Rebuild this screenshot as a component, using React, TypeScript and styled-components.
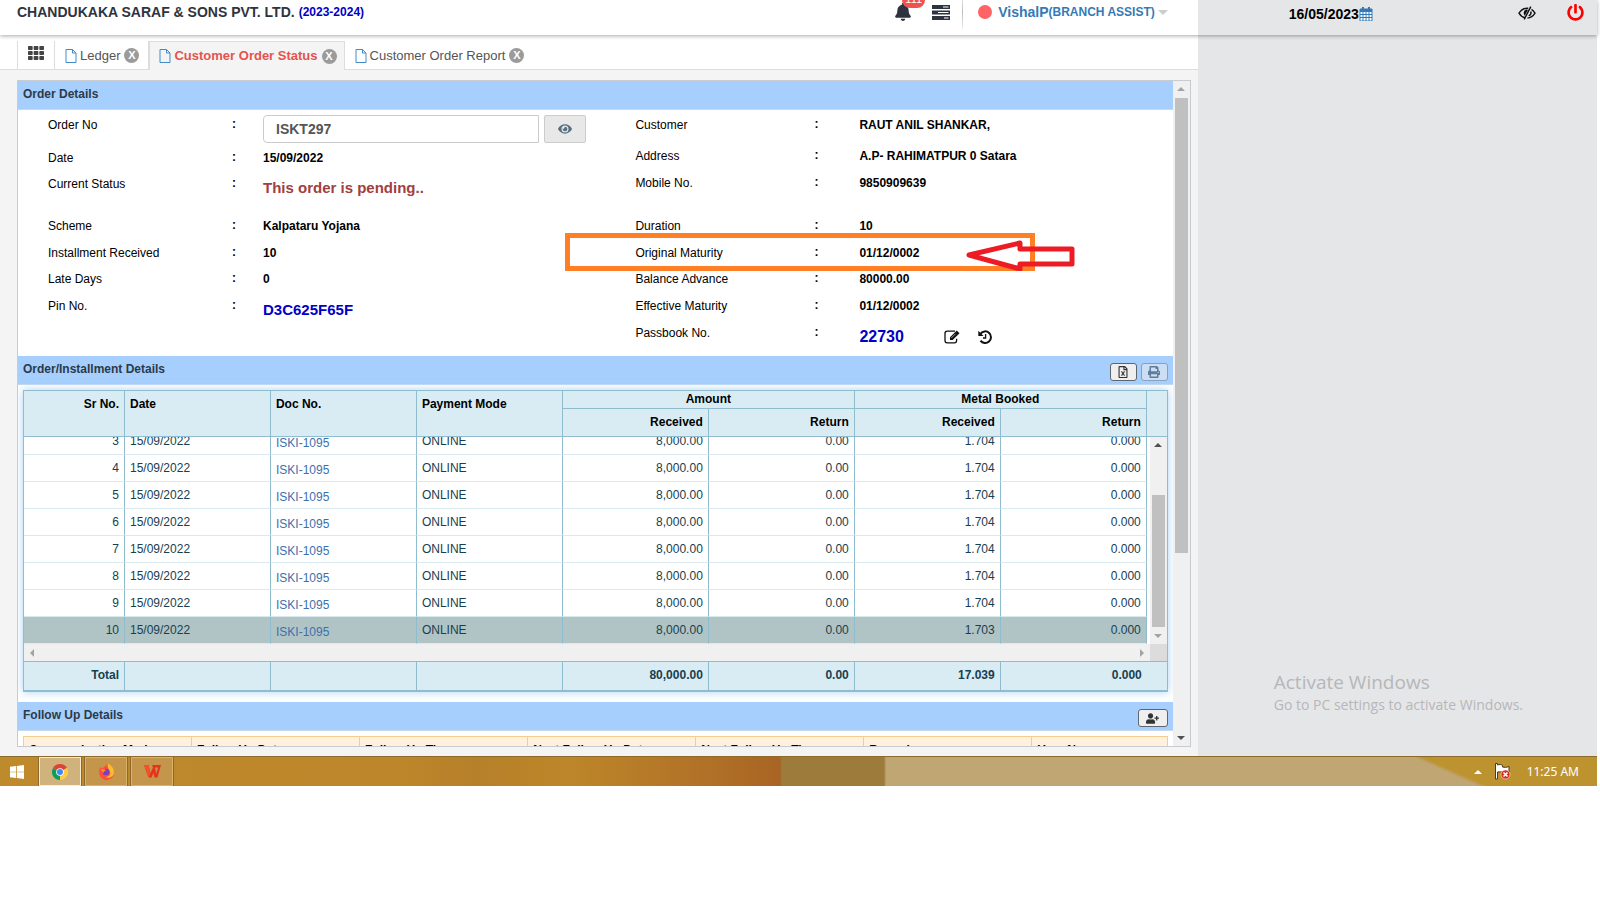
import React from 'react';
import styled, { createGlobalStyle, css } from 'styled-components';
import { FaBell, FaEye, FaPowerOff, FaPrint, FaUserPlus, FaRegFileExcel, FaTh } from 'react-icons/fa';

const C = {
  line: '#8fbdcf',
  head: '#d9ecf4',
  bar: '#a6cffd',
  bar2: '#c5daf0',
  link: '#337ab7',
  track: '#f0f0f0',
  thumb: '#c0c0c0',
};

const Global = createGlobalStyle`
  * { box-sizing: border-box; }
  body { margin: 0; background: #fff; font: 12px/16px "Liberation Sans", Arial, sans-serif; color: #000; }
  button, input { font-family: inherit; }
  a { text-decoration: none; }
`;

const Screen = styled.div`
  display: flex;
  flex-direction: column;
  margin-right: 3px;
`;
const Header = styled.header`
  display: flex;
  height: 35px;
  background: linear-gradient(to right, #fff 75%, #e5e6e8 75%);
  box-shadow: 0 1px 4px rgba(0, 0, 0, 0.35);
  position: relative;
  z-index: 1;
`;
const HeaderMain = styled.div`
  width: 75%;
  display: flex;
  align-items: center;
  padding: 0 30px 11px 17px;
`;
const HeaderSide = styled.div`
  width: 25%;
  display: flex;
  align-items: center;
  padding: 0 13px 7px 91px;
`;
const Company = styled.h1`
  margin: 0 4px 0 0;
  font-size: 14px;
  color: #2e3340;
`;
const Year = styled.b`
  color: #0000c8;
`;
const Spacer = styled.div`
  flex: 1;
`;
const Actions = styled.div<{ $gap: number }>`
  display: flex;
  align-items: center;
  gap: ${(p) => p.$gap}px;
  height: 24px;
`;
const TopActions = styled(Actions)`
  padding-bottom: 3px;
`;
const IconButton = styled.button<{ $color?: string }>`
  display: flex;
  position: relative;
  padding: 0;
  border: 0;
  background: none;
  color: ${(p) => p.$color || '#2e3340'};
`;
const Badge = styled.span`
  position: absolute;
  left: 8px;
  top: -11px;
  width: 23px;
  height: 16px;
  border-radius: 8px;
  background: #f0524f;
  color: #fff;
  font-size: 11px;
  line-height: 14px;
  text-align: center;
`;
const Divider = styled.div`
  width: 1px;
  height: 34px;
  margin: 0 15px 0 12px;
  background: linear-gradient(#eee, #bbb, #eee);
`;
const Dot = styled.span`
  width: 14px;
  height: 14px;
  margin-right: 6px;
  border-radius: 50%;
  background: #ff6464;
`;
const UserMenu = styled.button`
  display: flex;
  align-items: center;
  padding: 0;
  border: 0;
  background: none;
  color: ${C.link};
  font-weight: bold;
  font-size: 12px;
  line-height: 16px;
  strong { font-size: 14px; }
`;
const Caret = styled.span`
  margin-left: 3px;
  border: 5px solid transparent;
  border-top-color: #ccc;
  border-bottom: 0;
`;
const DateText = styled.b`
  font-size: 14px;
`;
const Columns = styled.div`
  display: flex;
`;
const Main = styled.main`
  width: 75%;
  background: #f4f4f4;
`;
const Aside = styled.aside`
  width: 25%;
  display: flex;
  flex-direction: column;
  justify-content: flex-end;
  padding: 0 0 42px 76px;
  background: #e5e6e8;
  color: #b6b7b8;
  font-family: "Open Sans", "Noto Sans", sans-serif;
  font-size: 14px;
  line-height: 18px;
`;
const AsideTitle = styled.div`
  font-size: 19px;
  line-height: 28px;
`;
const Tabs = styled.nav`
  display: flex;
  height: 35px;
  padding: 6px 0 0 17px;
  background: #fff;
  border-bottom: 1px solid #ddd;
`;
const Tab = styled.div<{ $active?: boolean }>`
  display: flex;
  align-items: center;
  gap: 4px;
  height: 29px;
  padding: 0 9px 0 10px;
  font-size: 13px;
  color: #555;
  ${(p) => p.$active && css`
    padding: 0 7px 0 9px;
    background: #f4f4f4;
    border: 1px solid #ddd;
    border-width: 1px 1px 0 2px;
    a { color: #e5534f; font-weight: bold; }
  `}
`;
const TabLink = styled.a`
  display: flex;
  align-items: center;
  gap: 3px;
  color: #555;
`;
const GridTab = styled.button`
  width: 38px;
  height: 28px;
  display: flex;
  align-items: center;
  justify-content: center;
  padding: 0 0 5px;
  border: 1px solid #ddd;
  border-width: 0 1px;
  background: #fff;
`;
const Close = styled.button`
  width: 15px;
  height: 15px;
  padding: 0;
  border: 0;
  border-radius: 50%;
  background: #9b9b9b;
  color: #fff;
  font-size: 11px;
  line-height: 15px;
  font-weight: bold;
`;
const Frame = styled.div`
  display: flex;
  height: 667px;
  margin: 10px 7px 9px 17px;
  border: 1px solid #c8ccd0;
  background: #fff;
`;
const Content = styled.div`
  flex: 1;
  min-width: 0;
  overflow: hidden;
`;
const Track = styled.div`
  display: flex;
  flex-direction: column;
  align-items: center;
  width: 17px;
  padding: 6px 0;
  background: ${C.track};
`;
const Thumb = styled.div<{ $h: number; $top: number }>`
  width: 13px;
  height: ${(p) => p.$h}px;
  margin-top: ${(p) => p.$top}px;
  background: ${C.thumb};
`;
const Arrow = styled.span<{ $dir: 'up' | 'down' | 'left' | 'right'; $color?: string }>`
  border: 4px solid transparent;
  ${(p) => {
    const c = p.$color || '#a3a3a3';
    return {
      up: `border-bottom-color: ${c}; border-top: 0;`,
      down: `border-top-color: ${c}; border-bottom: 0;`,
      left: `border-right-color: ${c}; border-left: 0;`,
      right: `border-left-color: ${c}; border-right: 0;`,
    }[p.$dir];
  }}
`;
const SectionBar = styled.div`
  display: flex;
  justify-content: space-between;
  align-items: flex-start;
  height: 29px;
  padding: 5px 5px 0;
  background: ${C.bar};
  border-bottom: 1px solid ${C.bar2};
`;
const SectionTitle = styled.h2`
  margin: 0;
  font-size: 12px;
  line-height: 16px;
  color: #2b3a4a;
`;
const Tools = styled.div`
  display: flex;
  gap: 4px;
  padding-top: 2px;
`;
const ToolButton = styled.button<{ $off?: boolean; $wide?: boolean }>`
  display: flex;
  align-items: center;
  justify-content: center;
  width: ${(p) => (p.$wide ? 30 : 27)}px;
  height: 18px;
  padding: 0;
  border: 1px solid ${(p) => (p.$off ? '#8aa0b8' : '#5d666f')};
  border-radius: 3px;
  background: ${(p) => (p.$off ? '#cbdef4' : '#efefef')};
  color: ${(p) => (p.$off ? '#5f7d9c' : '#333')};
`;
const Details = styled.div`
  display: grid;
  grid-template-columns: 1fr 1fr;
  height: 246px;
  padding: 5px 0 0 30px;
`;
const List = styled.div`
  position: relative;
`;
const Field = styled.div<{ $h: number }>`
  display: grid;
  grid-template-columns: 184px 31px 1fr;
  height: ${(p) => p.$h}px;
  padding-top: 2px;
`;
const RightField = styled(Field)`
  grid-template-columns: 179px 45px 1fr;
  padding-left: 25px;
`;
const Value = styled.div<{ $tone?: string; $size?: number }>`
  font-weight: bold;
  font-size: ${(p) => p.$size || 12}px;
  color: ${(p) => p.$tone || '#000'};
  padding-top: ${(p) => (p.$size ? 4 : 0)}px;
`;
const Colon = styled.b`
  line-height: 14px;
`;
const OrderRow = styled.div`
  display: flex;
  gap: 5px;
  height: 28px;
  margin-top: -2px;
`;
const OrderInput = styled.input`
  width: 276px;
  padding: 0 12px;
  border: 1px solid #ccc;
  border-radius: 4px 0 0 4px;
  font-size: 14px;
  font-weight: bold;
  color: #555;
`;
const ViewButton = styled.button`
  display: flex;
  align-items: center;
  justify-content: center;
  width: 42px;
  border: 1px solid #ccc;
  border-radius: 2px;
  background: #e8e8e8;
  color: #55707f;
`;
const Passbook = styled.div`
  display: flex;
  align-items: center;
  gap: 18px;
  height: 16px;
  margin-top: 4px;
  color: #0000c8;
  font-size: 16px;
  font-weight: bold;
  button:first-of-type { margin-left: 22px; }
`;
const Highlight = styled.div`
  position: absolute;
  left: -45px;
  top: 118px;
  width: 470px;
  height: 38px;
  border: 5px solid #ff7f27;
`;
const Pointer = styled.svg`
  position: absolute;
  left: 355px;
  top: 124px;
`;
const GridBox = styled.div`
  margin: 5px 5px 10px;
  border: 1px solid ${C.line};
  border-bottom-width: 2px;
  box-shadow: 0 0 8px rgba(110, 180, 240, 0.6);
`;
const Table = styled.table`
  width: 100%;
  table-layout: fixed;
  border-collapse: separate;
  border-spacing: 0;
  th, td { padding: 0 5px; text-align: left; border-right: 1px solid ${C.line}; }
  .num { text-align: right; }
`;
const HeadTable = styled(Table)`
  height: 46px;
  background: ${C.head};
  border-bottom: 1px solid ${C.line};
  th { vertical-align: top; padding-top: 5px; }
  .group { height: 18px; padding: 0; text-align: center; border-bottom: 1px solid ${C.line}; }
  .end { border-right: 0; }
`;
const BodyArea = styled.div`
  display: flex;
  height: 207px;
`;
const BodyView = styled.div`
  flex: 1;
  min-width: 0;
  overflow: hidden;
  display: flex;
  flex-direction: column;
  justify-content: flex-end;
`;
const BodyTable = styled(Table)`
  flex: none;
  color: #17404f;
  td { height: 27px; padding-bottom: 1px; border-bottom: 1px solid #d9eaf0; }
  td a { display: block; padding-top: 5px; color: #3c70ad; }
  tr.on td { background: #b0c4c6; border-bottom-color: #d9eaf0; }
`;
const InnerTrack = styled(Track)`
  margin-left: 3px;
`;
const HTrack = styled.div`
  display: flex;
  align-items: center;
  height: 17px;
  padding-left: 6px;
  background: ${C.track};
`;
const Corner = styled.div`
  width: 17px;
  height: 17px;
  margin-left: 6px;
  background: #dcdcdc;
`;
const FootTable = styled(Table)`
  background: ${C.head};
  border-top: 1px solid ${C.line};
  color: #17404f;
  font-weight: bold;
  td { height: 28px; padding-bottom: 3px; }
  td.end, td:last-child { border-right: 0; }
`;
const FollowBox = styled.div`
  margin: 5px 5px 0;
  border: 1px solid #f2cf8e;
  background: #fff1de;
`;
const FollowTable = styled(Table)`
  th { width: 15%; height: 30px; padding-top: 5px; border-color: #f2cf8e; vertical-align: top; }
  th:last-child { width: 12%; border-right: 0; }
`;
const Taskbar = styled.footer`
  display: flex;
  height: 30px;
  border-top: 1px solid #8d6a2c;
  background:
    linear-gradient(24deg, transparent 26%, #bd9330 30%) right / 184px 100% no-repeat,
    linear-gradient(to right, #bd8a2c 0, #bd862a 400px, #b6802a 475px, #bd8629 570px, #af6f27 720px, #a86424 780px, #9d7b3b 782px, #9d7b3b 884px, #bfa673 886px);
`;
const TaskButton = styled.button<{ $on?: boolean; $bare?: boolean }>`
  display: flex;
  align-items: center;
  justify-content: center;
  width: ${(p) => (p.$bare ? 34 : 42)}px;
  height: 29px;
  margin-right: ${(p) => (p.$bare ? 5 : 4)}px;
  padding: 0;
  border: 1px solid ${(p) => (p.$bare ? 'transparent' : p.$on ? '#f7ecd2' : '#d9b26b')};
  background: ${(p) => (p.$bare ? 'none' : p.$on ? '#cfb27c' : '#c4964c')};
  box-shadow: ${(p) => (p.$bare ? 'none' : '0 0 0 1px #8d6a2c')};
`;
const Tray = styled.div`
  display: flex;
  align-items: center;
  gap: 12px;
  margin-left: auto;
  padding-right: 18px;
  color: #fff;
  font-family: "Noto Sans", "Open Sans", sans-serif;
  span:last-child { margin-left: 4px; }
`;

const CalendarIcon = () => (
  <svg width="14" height="14" viewBox="0 0 14 14">
    <path d="M1 2h12v12H1z" fill="#fff" stroke={C.link} />
    <path d="M1 7.5h12M1 10.5h12M4 5v9M7 5v9M10 5v9" stroke={C.link} />
    <path d="M1 3.5h12" stroke={C.link} strokeWidth="3" />
    <path d="M4 0v3M10 0v3" stroke={C.link} strokeWidth="2" />
  </svg>
);
const TasksIcon = () => (
  <svg width="18" height="15" viewBox="0 0 18 15" fill="currentColor">
    <path d="M0 0h18v4H0zM0 5.500h18v4H0zM0 11h18v4H0z" />
    <path d="M11 1.500h5.500v1H11zM6 7h10.500v1H6zM12 12.500h4.500v1H12z" fill="#fff" />
  </svg>
);
const HiddenEyeIcon = () => (
  <svg width="18" height="14" viewBox="0 0 18 14" fill="none" stroke="currentColor" strokeWidth="1.400">
    <path d="M7 11.800C4.500 11.200 2.300 9.500 1 7.200 3 4 6 2.200 9 2.200l1.200.1" />
    <path d="M13.500 3.400c1.500.9 2.600 2.200 3.500 3.800-1.800 3-4.500 4.700-7.600 4.900" />
    <path d="M12.800.6L6.200 13.400" strokeWidth="1.500" />
    <path d="M6.800 9.800C5 8 5.300 4.500 8.200 3.500l1.800.2z" fill="currentColor" stroke="none" />
    <path d="M13 5.500c.3 2-.6 3.600-2.300 4.300" />
  </svg>
);
const EditIcon = () => (
  <svg width="16" height="14" viewBox="0 0 16 14" fill="none" stroke="currentColor">
    <path d="M11 1.200H3.200Q1 1.200 1 3.400v7.200q0 2.200 2.200 2.200h7.200q2.200 0 2.200-2.200V8.800" strokeWidth="1.300" />
    <path d="M6 7.300L12.800.5l2.700 2.700L8.700 10H6z" fill="currentColor" stroke="none" />
    <path d="M7.300 8l4.200-4.200" stroke="#fff" strokeWidth=".6" />
  </svg>
);
const HistoryIcon = () => (
  <svg width="14" height="14" viewBox="0 0 14 14" fill="none" stroke="currentColor">
    <path d="M2.600 3.600A5.800 5.800 0 1 1 2.500 10.600" strokeWidth="2" />
    <path d="M.3.800v5.200h5.200z" fill="currentColor" stroke="none" />
    <path d="M7.600 4v4H5" strokeWidth="1.300" />
  </svg>
);
const FileIcon = () => (
  <svg width="12" height="14" viewBox="0 0 12 14" fill="none" stroke="#428bca">
    <path d="M1 .5h6.500L11 4v9.500H1zM7.500.5V4H11" />
  </svg>
);
const WindowsIcon = () => (
  <svg width="14" height="14" viewBox="0 0 15 15" fill="#fff">
    <path d="M0 2l6.500-.9v6H0zM7.300 1L15 0v7.100H7.300zM0 7.900h6.500v6L0 13zM7.300 7.900H15V15l-7.700-1z" />
  </svg>
);
const ChromeIcon = () => (
  <svg width="16" height="16" viewBox="0 0 16 16">
    <path d="M8 8L1.070 4A8 8 0 0 1 14.930 4z" fill="#db4437" />
    <path d="M8 8L14.930 4A8 8 0 0 1 8 16z" fill="#ffcd40" />
    <path d="M8 8v8A8 8 0 0 1 1.070 4z" fill="#0f9d58" />
    <circle cx="8" cy="8" r="3.800" fill="#fff" />
    <circle cx="8" cy="8" r="3" fill="#4285f4" />
  </svg>
);
const FirefoxIcon = () => (
  <svg width="17" height="17" viewBox="0 0 17 17">
    <path d="M2 4l1.500 1.500L6 4l4-3.500L12 4l3 2c3 6-2 11-6.500 11S-1 12 2 4z" fill="#ff4f3a" />
    <path d="M10 .5c4 2.500 7 6 5.500 11-1.500 3-5 4-8 2.500 5 0 6-4 3.500-7.500C10 5 9 3 10 .5z" fill="#ffbd2e" />
    <circle cx="8" cy="9" r="3.300" fill="#7a3fc0" />
    <path d="M2.500 6.500c3-1 4.500 0 6 1-2 0-2.500 1-3 2.500z" fill="#ff8a1f" />
  </svg>
);
const WpsIcon = () => (
  <svg width="17" height="13" viewBox="0 0 17 13">
    <path d="M0 0h4.500l2 8L9 2.500 8 0h9l-3.500 12.500h-3L9.500 8l-2 4.500h-3z" fill="#e8321e" />
    <path d="M11 2.500h3L12.300 9z" fill="#c4964c" />
    <path d="M0 0h4.500l2 8-2 4.500z" fill="#f4502c" />
  </svg>
);
const FlagIcon = () => (
  <svg width="17" height="17" viewBox="0 0 17 17">
    <path d="M1.500.5h2V2c2-.8 3.500-.5 5 .3V4c2 .6 4 .5 6.500-.5v6c-4 1.500-7-1.500-11.500-.5V16h-2z" fill="#fff" stroke="#4c3b1c" />
    <circle cx="11.500" cy="11.500" r="4.500" fill="#d92c23" stroke="#fff" strokeWidth=".5" />
    <path d="M9.500 9.500l4 4m0-4l-4 4" stroke="#fff" strokeWidth="1.600" />
  </svg>
);

const Cols = ({ tail }: { tail?: boolean }) => (
  <colgroup>
    <col width={101} />
    {Array.from({ length: 7 }, (_, i) => <col key={i} />)}
    {tail && <col width={20} />}
  </colgroup>
);

const rows = [3, 4, 5, 6, 7, 8, 9, 10];
const followUp = ['Communication Mode', 'Follow Up Date', 'Follow Up Time', 'Next Follow Up Date', 'Next Follow Up Time', 'Remark', 'User Name'];

type RowProps = { label: string; h: number; children: React.ReactNode };
const Row = ({ label, h, children }: RowProps) => (
  <Field $h={h}><span>{label}</span><Colon>:</Colon>{children}</Field>
);
const RRow = ({ label, h, children }: RowProps) => (
  <RightField $h={h}><span>{label}</span><Colon>:</Colon>{children}</RightField>
);

export default function App() {
  return (
    <Screen>
      <Global />
      <Header>
        <HeaderMain>
          <Company>CHANDUKAKA SARAF &amp; SONS PVT. LTD.</Company>
          <Year>(2023-2024)</Year>
          <Spacer />
          <Actions $gap={20}>
            <IconButton aria-label="Notifications"><FaBell size={18} /><Badge>111</Badge></IconButton>
            <IconButton aria-label="Tasks"><TasksIcon /></IconButton>
          </Actions>
          <Divider />
          <Dot />
          <UserMenu><strong>VishalP</strong>(BRANCH ASSIST)<Caret /></UserMenu>
        </HeaderMain>
        <HeaderSide>
          <DateText>16/05/2023</DateText>
          <IconButton aria-label="Pick date"><CalendarIcon /></IconButton>
          <Spacer />
          <TopActions $gap={31}>
            <IconButton $color="#111" aria-label="Hide"><HiddenEyeIcon /></IconButton>
            <IconButton $color="#f00" aria-label="Log out"><FaPowerOff size={17} /></IconButton>
          </TopActions>
        </HeaderSide>
      </Header>
      <Columns>
        <Main>
          <Tabs>
            <GridTab aria-label="All modules"><FaTh size={16} color="#444" /></GridTab>
            <Tab><TabLink href="#ledger"><FileIcon />Ledger</TabLink><Close aria-label="Close Ledger">X</Close></Tab>
            <Tab $active><TabLink href="#status"><FileIcon />Customer Order Status</TabLink><Close aria-label="Close Customer Order Status">X</Close></Tab>
            <Tab><TabLink href="#report"><FileIcon />Customer Order Report</TabLink><Close aria-label="Close Customer Order Report">X</Close></Tab>
          </Tabs>
          <Frame>
            <Content>
              <SectionBar><SectionTitle>Order Details</SectionTitle></SectionBar>
              <Details>
                <List>
                  <Field $h={33}>
                    <label htmlFor="order">Order No</label><Colon>:</Colon>
                    <OrderRow>
                      <OrderInput id="order" defaultValue="ISKT297" />
                      <ViewButton aria-label="View order"><FaEye size={14} /></ViewButton>
                    </OrderRow>
                  </Field>
                  <Row label="Date" h={26}><Value>15/09/2022</Value></Row>
                  <Row label="Current Status" h={42}><Value $tone="#a04040" $size={15}>This order is pending..</Value></Row>
                  <Row label="Scheme" h={27}><Value>Kalpataru Yojana</Value></Row>
                  <Row label="Installment Received" h={26}><Value>10</Value></Row>
                  <Row label="Late Days" h={27}><Value>0</Value></Row>
                  <Row label="Pin No." h={27}><Value $tone="#0000c8" $size={15}>D3C625F65F</Value></Row>
                </List>
                <List>
                  <RRow label="Customer" h={31}><Value>RAUT ANIL SHANKAR,</Value></RRow>
                  <RRow label="Address" h={27}><Value>A.P- RAHIMATPUR 0 Satara</Value></RRow>
                  <RRow label="Mobile No." h={43}><Value>9850909639</Value></RRow>
                  <RRow label="Duration" h={27}><Value>10</Value></RRow>
                  <RRow label="Original Maturity" h={26}><Value>01/12/0002</Value></RRow>
                  <RRow label="Balance Advance" h={27}><Value>80000.00</Value></RRow>
                  <RRow label="Effective Maturity" h={27}><Value>01/12/0002</Value></RRow>
                  <RRow label="Passbook No." h={27}>
                    <Passbook>
                      22730
                      <IconButton $color="#111" aria-label="Edit"><EditIcon /></IconButton>
                      <IconButton $color="#111" aria-label="History"><HistoryIcon /></IconButton>
                    </Passbook>
                  </RRow>
                  <Highlight />
                  <Pointer width="112" height="32" viewBox="0 0 112 32">
                    <path d="M4 16L55 4v6h52v15H55v5z" fill="none" stroke="#ed1c24" strokeWidth="5" strokeLinejoin="round" />
                  </Pointer>
                </List>
              </Details>
              <SectionBar>
                <SectionTitle>Order/Installment Details</SectionTitle>
                <Tools>
                  <ToolButton aria-label="Export to Excel"><FaRegFileExcel size={12} /></ToolButton>
                  <ToolButton $off disabled aria-label="Print"><FaPrint size={12} /></ToolButton>
                </Tools>
              </SectionBar>
              <GridBox>
                <HeadTable>
                  <Cols tail />
                  <thead>
                    <tr>
                      <th rowSpan={2} className="num">Sr No.</th>
                      <th rowSpan={2}>Date</th>
                      <th rowSpan={2}>Doc No.</th>
                      <th rowSpan={2}>Payment Mode</th>
                      <th colSpan={2} className="group">Amount</th>
                      <th colSpan={2} className="group">Metal Booked</th>
                      <th rowSpan={2} className="end" />
                    </tr>
                    <tr>
                      <th className="num">Received</th>
                      <th className="num">Return</th>
                      <th className="num">Received</th>
                      <th className="num">Return</th>
                    </tr>
                  </thead>
                </HeadTable>
                <BodyArea>
                  <BodyView>
                    <BodyTable>
                      <Cols />
                      <tbody>
                        {rows.map((n) => (
                          <tr key={n} className={n === 10 ? 'on' : ''}>
                            <td className="num">{n}</td>
                            <td>15/09/2022</td>
                            <td><a href="#doc">ISKI-1095</a></td>
                            <td>ONLINE</td>
                            <td className="num">8,000.00</td>
                            <td className="num">0.00</td>
                            <td className="num">{n === 10 ? '1.703' : '1.704'}</td>
                            <td className="num">0.000</td>
                          </tr>
                        ))}
                      </tbody>
                    </BodyTable>
                  </BodyView>
                  <InnerTrack>
                    <Arrow $dir="up" $color="#505050" />
                    <Thumb $h={132} $top={48} />
                    <Spacer />
                    <Arrow $dir="down" />
                  </InnerTrack>
                </BodyArea>
                <HTrack>
                  <Arrow $dir="left" />
                  <Spacer />
                  <Arrow $dir="right" />
                  <Corner />
                </HTrack>
                <FootTable>
                  <Cols tail />
                  <tbody>
                    <tr>
                      <td className="num">Total</td><td /><td /><td />
                      <td className="num">80,000.00</td>
                      <td className="num">0.00</td>
                      <td className="num">17.039</td>
                      <td className="num end">0.000</td>
                      <td />
                    </tr>
                  </tbody>
                </FootTable>
              </GridBox>
              <SectionBar>
                <SectionTitle>Follow Up Details</SectionTitle>
                <Tools><ToolButton $wide aria-label="Add follow up"><FaUserPlus size={13} /></ToolButton></Tools>
              </SectionBar>
              <FollowBox>
                <FollowTable>
                  <thead><tr>{followUp.map((t) => <th key={t}>{t}</th>)}</tr></thead>
                </FollowTable>
              </FollowBox>
            </Content>
            <Track>
              <Arrow $dir="up" />
              <Thumb $h={455} $top={7} />
              <Spacer />
              <Arrow $dir="down" $color="#505050" />
            </Track>
          </Frame>
        </Main>
        <Aside>
          <AsideTitle>Activate Windows</AsideTitle>
          Go to PC settings to activate Windows.
        </Aside>
      </Columns>
      <Taskbar>
        <TaskButton $bare aria-label="Start"><WindowsIcon /></TaskButton>
        <TaskButton $on aria-label="Chrome"><ChromeIcon /></TaskButton>
        <TaskButton aria-label="Firefox"><FirefoxIcon /></TaskButton>
        <TaskButton aria-label="WPS Office"><WpsIcon /></TaskButton>
        <Tray><Arrow $dir="up" $color="#fff" /><FlagIcon /><span>11:25 AM</span></Tray>
      </Taskbar>
    </Screen>
  );
}
